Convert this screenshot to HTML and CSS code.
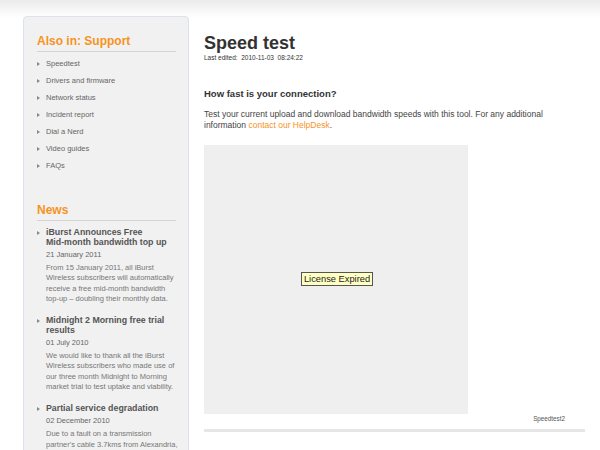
FILE: index.html
```html
<!DOCTYPE html>
<html>
<head>
<meta charset="utf-8">
<link rel="stylesheet" href="styles.css">
</head>
<body>
<div class="topfade"></div>
<div class="page">
  <aside class="sidebar">
    <h2 class="side-title">Also in: Support</h2>
    <ul class="menu">
      <li>Speedtest</li>
      <li>Drivers and firmware</li>
      <li>Network status</li>
      <li>Incident report</li>
      <li>Dial a Nerd</li>
      <li>Video guides</li>
      <li>FAQs</li>
    </ul>
    <h2 class="side-title news-title">News</h2>
    <ul class="news">
      <li>
        <div class="news-head">iBurst Announces Free <span class="nowrap">Mid-month</span> bandwidth top up</div>
        <div class="news-date">21 January 2011</div>
        <div class="news-body">From 15 January 2011, all iBurst Wireless subscribers will automatically receive a free <span class="nowrap">mid-month</span> bandwidth top-up – doubling their monthly data.</div>
      </li>
      <li>
        <div class="news-head">Midnight 2 Morning free trial results</div>
        <div class="news-date">01 July 2010</div>
        <div class="news-body">We would like to thank all the iBurst Wireless subscribers who made use of our three month Midnight to Morning market trial to test uptake and viability.</div>
      </li>
      <li>
        <div class="news-head">Partial service degradation</div>
        <div class="news-date">02 December 2010</div>
        <div class="news-body">Due to a fault on a transmission partner's cable 3.7kms from Alexandria, some subscribers experienced degraded service.</div>
      </li>
    </ul>
  </aside>
  <main class="main">
    <h1 class="title">Speed test</h1>
    <div class="edited">Last edited:&nbsp; 2010-11-03&nbsp; 08:24:22</div>
    <h3 class="subtitle">How fast is your connection?</h3>
    <p class="intro">Test your current upload and download bandwidth speeds with this tool. For any additional information <a class="link" href="#">contact our HelpDesk</a>.</p>
    <div class="applet">
      <span class="expired">License Expired</span>
    </div>
    <div class="caption">Speedtest2</div>
    <div class="rule"></div>
  </main>
</div>
</body>
</html>
```
FILE: styles.css
```css
html, body {
  margin: 0;
  padding: 0;
  background: #fff;
  font-family: "Liberation Sans", Arial, sans-serif;
  color: #555;
  height: 450px;
  overflow: hidden;
}
.topfade {
  position: absolute;
  left: 0;
  top: 0;
  width: 100%;
  height: 18px;
  background: linear-gradient(#ebebeb, #ffffff);
}
.page {
  position: relative;
  display: flex;
  gap: 15px;
  padding: 16px 0 0 23px;
}
.sidebar {
  width: 139px;
  flex: none;
  background: #f1f1f1;
  border: 1px solid #dde3ec;
  border-radius: 4px;
  padding: 16px 12px 0 13px;
  height: 600px;
}
.side-title {
  margin: 0;
  font-size: 12px;
  line-height: 16px;
  font-weight: bold;
  color: #f7931e;
  padding-bottom: 2px;
  border-bottom: 1px solid #d4d4d4;
}
.menu {
  list-style: none;
  margin: 0;
  padding: 3px 0 0 0;
}
.menu li, .news li {
  position: relative;
  padding-left: 9px;
}
.menu li {
  font-size: 7.5px;
  color: #666;
  line-height: 17px;
}
.menu li::before, .news li::before {
  content: "";
  position: absolute;
  left: 0;
  top: 7px;
  border-left: 3px solid #888;
  border-top: 2px solid transparent;
  border-bottom: 2px solid transparent;
}
.news-title {
  margin-top: 28px;
}
.news {
  list-style: none;
  margin: 0;
  padding: 6px 0 0 0;
}
.news li {
  margin-bottom: 11px;
}
.news li::before {
  top: 4px;
}
.nowrap {
  white-space: nowrap;
}
.news-head {
  font-size: 8.8px;
  font-weight: bold;
  color: #555;
  line-height: 10px;
}
.news-date {
  font-size: 7.5px;
  color: #666;
  margin-top: 3px;
  line-height: 10px;
}
.news-body {
  font-size: 7.5px;
  color: #777;
  line-height: 10.3px;
  margin-top: 3px;
  margin-right: -4px;
}
.main {
  width: 381px;
  flex: none;
}
.title {
  margin: 16px 0 0 0;
  font-size: 18px;
  font-weight: bold;
  color: #333;
  line-height: 22px;
}
.edited {
  font-size: 6.5px;
  line-height: 8px;
  color: #333;
  margin-top: 0;
}
.subtitle {
  margin: 26px 0 0 0;
  font-size: 9.5px;
  font-weight: bold;
  color: #333;
}
.intro {
  margin: 10px 0 0 0;
  font-size: 8.5px;
  line-height: 11px;
  color: #444;
}
.link {
  color: #f7931e;
  text-decoration: none;
}
.applet {
  margin-top: 14px;
  width: 264px;
  height: 269px;
  background: #efefef;
  display: flex;
  align-items: center;
  justify-content: center;
}
.expired {
  font-size: 9.3px;
  color: #222;
  background: #ffffc2;
  border: 1px solid #555;
  padding: 1px 2px;
  margin-left: 2px;
  margin-top: -2px;
}
.caption {
  font-size: 6.3px;
  color: #555;
  text-align: right;
  padding-right: 20px;
  margin-top: 1px;
}
.rule {
  margin-top: 7px;
  height: 3px;
  background: #e6e6e6;
}
```
